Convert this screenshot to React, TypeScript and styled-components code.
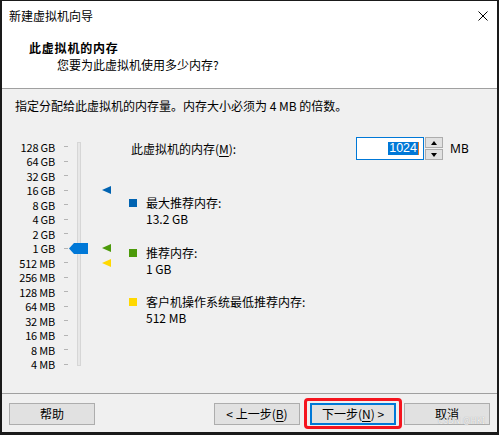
import { FunctionComponent } from "react";
import styled, { createGlobalStyle } from "styled-components";

const GlobalStyle = createGlobalStyle`
    * {
        box-sizing: border-box;
    }
    body {
        margin: 0;
        background: #ffffff;
        font-family: "Noto Sans CJK SC", "Noto Sans", sans-serif;
        font-size: 12px;
        color: #000000;
    }
`;

const Window = styled.div`
    display: flex;
    flex-direction: column;
    width: 499px;
    height: 435px;
    border-style: solid;
    border-color: #1a1a1a;
    border-width: 1px 2px 3px 2px;
    background-color: #f0f0f0;
    position: relative;
`;

const TitleBar = styled.div`
    display: flex;
    align-items: center;
    justify-content: space-between;
    height: 30px;
    padding: 0 9px 0 7px;
    background-color: #ffffff;
    line-height: 16px;
`;

const CloseButton = styled.div`
    display: flex;
    width: 10px;
    height: 10px;
`;

const Header = styled.div`
    display: flex;
    flex-direction: column;
    height: 57px;
    padding: 9px 0 0 27px;
    background-color: #ffffff;
    line-height: 16px;
`;

const HeaderTitle = styled.div`
    font-weight: bold;
    letter-spacing: 0.8px;
`;

const HeaderSubtitle = styled.div`
    margin-top: 1px;
    margin-left: 28px;
`;

const Divider = styled.div`
    height: 1px;
    background-color: #a0a0a0;
`;

const Body = styled.div`
    display: flex;
    flex-direction: column;
    flex: 1;
    padding: 9px 0 0 13px;
    line-height: 16px;
`;

const ContentRow = styled.div`
    display: flex;
    margin-top: 23px;
    margin-left: -13px;
`;

const LabelColumn = styled.div`
    display: flex;
    flex-direction: column;
    width: 53px;
    padding-top: 2.5px;
    text-align: right;
`;

const TickColumn = styled.div`
    display: flex;
    flex-direction: column;
    width: 4px;
    margin-left: 9px;
    padding-top: 2.5px;
`;

const MarkerColumn = styled.div`
    display: flex;
    flex-direction: column;
    width: 9px;
    margin-left: 21px;
    padding-top: 2.5px;
`;

const SliderRow = styled.div`
    display: flex;
    align-items: center;
    justify-content: flex-end;
    height: 14.5px;
    font-size: 11px;
    line-height: 14.5px;
    white-space: nowrap;
    letter-spacing: -0.2px;
`;

const Tick = styled.div`
    width: 4px;
    height: 1px;
    background-color: #b4b4b4;
`;

const TrackColumn = styled.div`
    display: flex;
    flex-direction: column;
    width: 4px;
    margin-left: 9px;
    padding: 5px 0 6px 0;
    position: relative;
`;

const Track = styled.div`
    flex: 1;
    border: 1px solid #d6d6d6;
    background-color: #e7e7e7;
`;

const Thumb = styled.div`
    position: absolute;
    left: -8px;
    width: 19px;
    height: 11px;
    background-color: #0078d7;
    clip-path: polygon(0 50%, 5px 0, 100% 0, 100% 100%, 5px 100%);
`;

const Marker = styled.div<{ $color: string }>`
    width: 0;
    height: 0;
    border-top: 4.5px solid transparent;
    border-bottom: 4.5px solid transparent;
    border-right: 9px solid ${(p) => p.$color};
`;

const Panel = styled.div`
    display: flex;
    flex-direction: column;
    margin-left: 18px;
`;

const MemoryRow = styled.div`
    display: flex;
    align-items: center;
    height: 23px;
`;

const MemoryLabel = styled.div`
    width: 227px;
    padding-left: 2px;
`;

const Key = styled.span`
    text-decoration: underline;
    text-underline-offset: 2px;
`;

const SpinBox = styled.div`
    display: flex;
    height: 23px;
`;

const NumberInput = styled.div`
    display: flex;
    align-items: center;
    justify-content: flex-end;
    width: 68px;
    height: 23px;
    padding-right: 4px;
    border: 1px solid #0078d7;
    background-color: #ffffff;
    font-family: "Liberation Sans", sans-serif;
    font-size: 12.5px;
`;

const Selection = styled.span`
    padding: 0 1px;
    line-height: 13px;
    background-color: #0078d7;
    color: #ffffff;
    border-right: 1px solid #e07a2a;
`;

const SpinButtons = styled.div`
    display: flex;
    flex-direction: column;
    width: 18px;
    margin-left: 1px;
    gap: 1px;
`;

const SpinButton = styled.div`
    display: flex;
    align-items: center;
    justify-content: center;
    flex: 1;
    border: 1px solid #adadad;
    background-color: #e1e1e1;
`;

const Arrow = styled.div<{ $up?: boolean }>`
    width: 0;
    height: 0;
    border-left: 3.5px solid transparent;
    border-right: 3.5px solid transparent;
    ${(p) =>
        p.$up
            ? "border-bottom: 4px solid #000000;"
            : "border-top: 4px solid #000000;"}
`;

const Unit = styled.div`
    margin-left: 7px;
    font-family: "Noto Sans", sans-serif;
`;

const Legend = styled.div`
    display: flex;
    flex-direction: column;
    gap: 17.5px;
    margin-top: 35px;
`;

const LegendItem = styled.div`
    display: flex;
    align-items: flex-start;
    gap: 9px;
`;

const Swatch = styled.div<{ $color: string }>`
    width: 8px;
    height: 8px;
    margin-top: 4px;
    background-color: ${(p) => p.$color};
`;

const LegendText = styled.div`
    display: flex;
    flex-direction: column;
    line-height: 16px;
`;

const Footer = styled.div`
    display: flex;
    align-items: flex-start;
    height: 38px;
    padding: 9px 7px 0 7px;
`;

const Button = styled.div<{ $default?: boolean }>`
    display: flex;
    align-items: center;
    justify-content: center;
    width: 86px;
    height: 22px;
    border: ${(p) => (p.$default ? "2px solid #0078d7" : "1px solid #adadad")};
    background-color: #e1e1e1;
    line-height: 16px;
    white-space: pre;
`;

const Spacer = styled.div`
    flex: 1;
`;

const Highlighted = styled.div`
    position: relative;
    margin-left: 10px;
    margin-right: 8px;
`;

const HighlightRing = styled.div`
    position: absolute;
    top: -5px;
    right: -6px;
    bottom: -4px;
    left: -6px;
    border: 3px solid #f5141e;
    border-radius: 4px;
`;

const Watermark = styled.div`
    position: absolute;
    right: 12px;
    bottom: 6px;
    font-family: "Noto Sans", sans-serif;
    font-size: 8px;
    letter-spacing: 0.3px;
    color: rgba(255, 255, 255, 0.85);
    text-shadow: 0 0 1px rgba(120, 120, 120, 0.7);
`;

const sizes = [
    "128 GB",
    "64 GB",
    "32 GB",
    "16 GB",
    "8 GB",
    "4 GB",
    "2 GB",
    "1 GB",
    "512 MB",
    "256 MB",
    "128 MB",
    "64 MB",
    "32 MB",
    "16 MB",
    "8 MB",
    "4 MB",
];

// markers beside the slider: max recommended, recommended, guest minimum
const markers: Record<number, string> = {
    3: "#0063b1",
    7: "#4c9a0a",
    8: "#ffd800",
};

const currentIndex = 7;

const legend = [
    { color: "#0063b1", title: "最大推荐内存:", value: "13.2 GB" },
    { color: "#4c9a0a", title: "推荐内存:", value: "1 GB" },
    { color: "#ffd800", title: "客户机操作系统最低推荐内存:", value: "512 MB" },
];

const App: FunctionComponent = () => {
    return (
        <Window>
            <GlobalStyle />
            <TitleBar>
                <span>新建虚拟机向导</span>
                <CloseButton>
                    <svg width="10" height="10" viewBox="0 0 10 10">
                        <path
                            d="M0.5 0.5 L9.5 9.5 M9.5 0.5 L0.5 9.5"
                            stroke="#000"
                            strokeWidth="1"
                        />
                    </svg>
                </CloseButton>
            </TitleBar>
            <Header>
                <HeaderTitle>此虚拟机的内存</HeaderTitle>
                <HeaderSubtitle>您要为此虚拟机使用多少内存?</HeaderSubtitle>
            </Header>
            <Divider />
            <Body>
                <div>指定分配给此虚拟机的内存量。内存大小必须为 4 MB 的倍数。</div>
                <ContentRow>
                    <LabelColumn>
                        {sizes.map((s) => (
                            <SliderRow key={s}>{s}</SliderRow>
                        ))}
                    </LabelColumn>
                    <TickColumn>
                        {sizes.map((s) => (
                            <SliderRow key={s}>
                                <Tick />
                            </SliderRow>
                        ))}
                    </TickColumn>
                    <TrackColumn>
                        <Track />
                        <Thumb style={{ top: 2.5 + currentIndex * 14.5 + 2 }} />
                    </TrackColumn>
                    <MarkerColumn>
                        {sizes.map((s, i) => (
                            <SliderRow key={s}>
                                {markers[i] ? <Marker $color={markers[i]} /> : null}
                            </SliderRow>
                        ))}
                    </MarkerColumn>
                    <Panel>
                        <MemoryRow>
                            <MemoryLabel>
                                此虚拟机的内存(<Key>M</Key>):
                            </MemoryLabel>
                            <SpinBox>
                                <NumberInput>
                                    <Selection>1024</Selection>
                                </NumberInput>
                                <SpinButtons>
                                    <SpinButton>
                                        <Arrow $up />
                                    </SpinButton>
                                    <SpinButton>
                                        <Arrow />
                                    </SpinButton>
                                </SpinButtons>
                            </SpinBox>
                            <Unit>MB</Unit>
                        </MemoryRow>
                        <Legend>
                            {legend.map((item) => (
                                <LegendItem key={item.title}>
                                    <Swatch $color={item.color} />
                                    <LegendText>
                                        <span>{item.title}</span>
                                        <span>{item.value}</span>
                                    </LegendText>
                                </LegendItem>
                            ))}
                        </Legend>
                    </Panel>
                </ContentRow>
            </Body>
            <Divider />
            <Footer>
                <Button>帮助</Button>
                <Spacer />
                <Button>
                    {"< 上一步("}
                    <Key>B</Key>
                    {")"}
                </Button>
                <Highlighted>
                    <Button $default>
                        {"下一步("}
                        <Key>N</Key>
                        {") >"}
                    </Button>
                    <HighlightRing />
                </Highlighted>
                <Button>取消</Button>
            </Footer>
            <Watermark>CSDN @HKI</Watermark>
        </Window>
    );
};

export default App;
